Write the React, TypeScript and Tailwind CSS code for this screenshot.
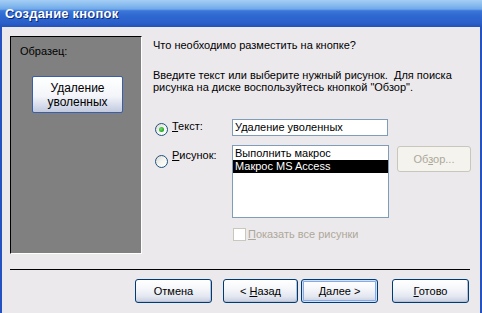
import React from "react";

function XPButton({
  children,
  def,
  w,
}: {
  children: React.ReactNode;
  def?: boolean;
  w: string;
}) {
  return (
    <div
      className={`${w} h-[24px] rounded-[3px] border border-[#003c74] bg-[linear-gradient(to_bottom,#ffffff_0%,#f7f8fb_35%,#e3e7f0_75%,#c6cddf_100%)] flex items-center justify-center text-[11px] leading-[13px] text-black ${
        def
          ? "shadow-[inset_0_0_0_1px_#cfe0fb,inset_0_0_0_2px_#87abe8]"
          : "shadow-[inset_-1px_-1px_0_#b9c1d6]"
      }`}
    >
      {children}
    </div>
  );
}

function Radio({ checked }: { checked?: boolean }) {
  return (
    <div className="w-[13px] h-[13px] rounded-full border border-[#1c5180] bg-[linear-gradient(135deg,#dcdcd6_0%,#f4f4f0_50%,#ffffff_100%)] flex items-center justify-center shrink-0">
      {checked && (
        <div className="w-[5px] h-[5px] rounded-full bg-[radial-gradient(circle_at_40%_40%,#6ee36e_0%,#21a121_70%,#1a8a1a_100%)]" />
      )}
    </div>
  );
}

export default function App() {
  return (
    <div className="w-[482px] h-[313px] flex flex-col overflow-hidden font-['Liberation_Sans',Arial,sans-serif] text-[11px] text-black select-none">
      {/* Title bar */}
      <div className="h-[27px] shrink-0 bg-[linear-gradient(to_bottom,#a4cdf3_0%,#86bbef_20%,#6ea7ea_34%,#3b76d8_40%,#2f68d0_60%,#2a5fc9_85%,#2352ba_100%)] flex items-center pl-[5px]">
        <span className="text-white font-bold text-[13px] leading-[15px] tracking-[0.2px] [text-shadow:1px_1px_0_#0a2a7a]">
          Создание кнопок
        </span>
      </div>

      {/* Body */}
      <div className="flex-1 bg-[#ece9ed] border-x-2 border-[#2452c0] flex flex-col">
        <div className="flex pt-[9px] pl-[8px]">
          {/* Sample panel */}
          <div className="w-[132px] h-[218px] border-t border-l border-t-[#000000] border-l-[#000000] border-b border-r border-b-[#ffffff] border-r-[#ffffff] bg-[#808080] flex flex-col">
            <div className="pl-[9px] pt-[8px] leading-[13px]">Образец:</div>
            <div className="ml-[21px] mt-[18px] w-[91px] h-[37px] rounded-[2px] border border-[#3a5ea8] bg-[linear-gradient(to_bottom,#ffffff_0%,#f3f5f9_55%,#dde2ee_75%,#c2cadf_100%)] flex flex-col items-center justify-center text-[12px] leading-[14px]">
              <span>Удаление</span>
              <span>уволенных</span>
            </div>
          </div>

          {/* Right column */}
          <div className="ml-[11px] flex flex-col">
            <div className="mt-[3px] leading-[13px] h-[13px]">
              Что необходимо разместить на кнопке?
            </div>
            <div className="mt-[17px] leading-[12px]">
              <div>Введите текст или выберите нужный рисунок.&nbsp; Для поиска</div>
              <div>рисунка на диске воспользуйтесь кнопкой "Обзор".</div>
            </div>

            {/* Row: Текст */}
            <div className="mt-[26px] flex items-start h-[17px]">
              <div className="ml-[2px] mt-[4px]">
                <Radio checked />
              </div>
              <div className="ml-[4px] mt-[1px] w-[60px] leading-[13px]">
                <u className="underline-offset-1">Т</u>екст:
              </div>
              <div className="w-[156px] h-[17px] border border-[#7f9db9] bg-white pl-[2px] leading-[15px]">
                Удаление уволенных
              </div>
            </div>

            {/* Row: Рисунок */}
            <div className="mt-[9px] flex items-start">
              <div className="ml-[2px] mt-[10px]">
                <Radio />
              </div>
              <div className="ml-[4px] mt-[4px] w-[60px] leading-[13px]">
                <u className="underline-offset-1">Р</u>исунок:
              </div>
              <div className="w-[157px] h-[73px] border border-[#7f9db9] bg-white pt-[1px] flex flex-col">
                <div className="h-[13px] leading-[13px] pl-[2px]">Выполнить макрос</div>
                <div className="h-[13px] leading-[13px] pl-[2px] bg-black text-white">
                  Макрос MS Access
                </div>
              </div>
              <div className="ml-[8px] mt-[1px] w-[74px] h-[26px] rounded-[3px] border border-[#c9c7ba] bg-[#f4f3ee] flex items-center justify-center text-[#aca899]">
                <span>
                  Об<u className="underline-offset-1">з</u>ор...
                </span>
              </div>
            </div>

            {/* Checkbox */}
            <div className="mt-[10px] ml-[80px] flex items-center h-[13px]">
              <div className="w-[13px] h-[13px] border border-[#cac8bb] bg-white" />
              <div className="ml-[2px] text-[#aca899] leading-[13px]">
                <u className="underline-offset-1">П</u>оказать все рисунки
              </div>
            </div>
          </div>
        </div>

        {/* Separator */}
        <div className="mt-[15px] ml-[8px] mr-[10px] h-px bg-[#000000]" />

        {/* Buttons */}
        <div className="mt-[9px] flex pl-[133px]">
          <XPButton w="w-[77px]">Отмена</XPButton>
          <div className="ml-[11px]">
            <XPButton w="w-[75px]">
              <span>
                &lt; <u className="underline-offset-1">Н</u>азад
              </span>
            </XPButton>
          </div>
          <div className="ml-[3px]">
            <XPButton w="w-[77px]" def>
              <span>
                <u className="underline-offset-1">Д</u>алее &gt;
              </span>
            </XPButton>
          </div>
          <div className="ml-[14px]">
            <XPButton w="w-[77px]">
              <span>
                <u className="underline-offset-1">Г</u>отово
              </span>
            </XPButton>
          </div>
        </div>
      </div>
    </div>
  );
}
